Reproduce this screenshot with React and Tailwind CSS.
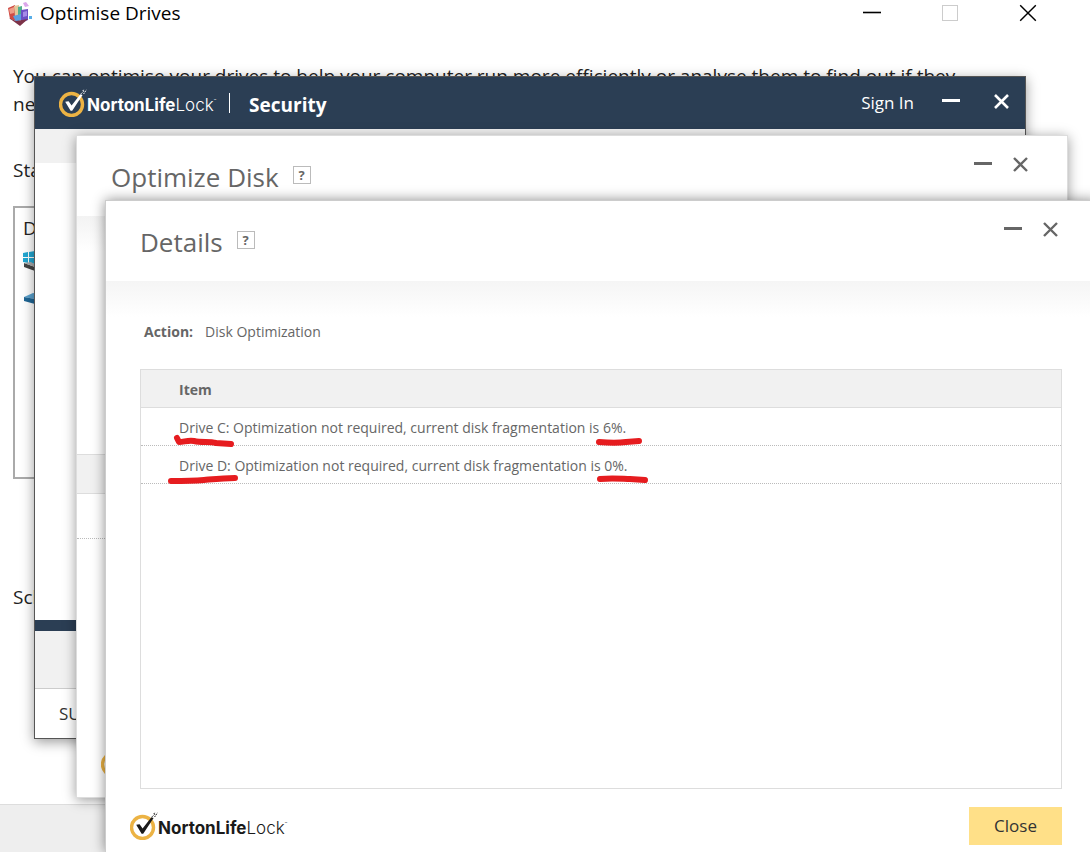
import React from 'react';

const drives = [
    { name: 'Drive C:', fragmentation: '6%' },
    { name: 'Drive D:', fragmentation: '0%' },
];

const CloseGlyph = ({ size = 15, strokeWidth = 2 }) => (
    <svg width={size} height={size} viewBox="0 0 15 15" fill="none" stroke="currentColor" strokeWidth={strokeWidth}>
        <path d="M1 1L14 14M14 1L1 14" />
    </svg>
);

const MinimizeGlyph = ({ strokeWidth = 3 }) => (
    <svg width="18" height="15" viewBox="0 0 18 15" fill="none" stroke="currentColor" strokeWidth={strokeWidth}>
        <path d="M0 6.5H18" />
    </svg>
);

const NortonLogo = ({ inverted }) => {
    const tone = inverted ? 'text-white' : 'text-[#1a1a1a]';

    return (
        <div className={`flex h-7 items-center ${tone}`}>
            <svg width="28" height="28" viewBox="0 0 28 28" fill="none" className="shrink-0">
                <circle cx="12.5" cy="15.5" r="11" stroke="#ecb344" strokeWidth="3.4" />
                <path d="M6.2 12.8L9.6 12.2L12.6 16.6L21.4 5.2L23.6 6L13.2 21.8H11.6Z" fill="currentColor" />
                <path d="M22 4.8L25 1.8M24.6 5L27.4 .8M23.8 2L24.6 .8" stroke="currentColor" strokeWidth="1" strokeDasharray="1.6 .8" />
            </svg>
            <span className="flex items-start pt-1 font-['Inter',sans-serif] text-[17px] leading-6">
                <span className="font-bold">NortonLife</span>
                <span className="font-light">Lock</span>
                <span className="text-[4px] leading-4">™</span>
            </span>
        </div>
    );
};

const DialogHeader = ({ title }) => (
    <header className="flex h-20 shrink-0 items-start justify-between bg-white pr-8 pl-[34px]">
        <div className="flex items-center gap-[14px] pt-[21px]">
            <h2 className="text-[26px] leading-10 text-[#666]">{title}</h2>
            <button type="button" aria-label="Help" className="mb-1 flex size-[18px] items-center justify-center border border-[#bbb] text-[13px] leading-4 font-bold text-[#666]">
                ?
            </button>
        </div>
        <div className="flex items-center gap-[21px] pt-[21px] pr-[7px] text-[#666]">
            <button type="button" aria-label="Minimize"><MinimizeGlyph /></button>
            <button type="button" aria-label="Close window"><CloseGlyph strokeWidth={2.4} /></button>
        </div>
    </header>
);

const OptimiseDrivesWindow = () => (
    <section className="flex h-full flex-col text-[19px] text-[#222]">
        <header className="flex h-[26px] items-center justify-between pr-[53px] pl-2 text-black">
            <div className="flex items-center gap-2">
                <svg width="24" height="25" viewBox="0 0 24 25">
                    <path d="M0 7L7 4L9 20L2 18Z" fill="#cf4a44" />
                    <path d="M1 8L6 6V12L2 13Z" fill="#ee9c86" />
                    <path d="M6 5L11 4V14L7 16Z" fill="#e3c79a" />
                    <path d="M10 6L14 5V14L10 15Z" fill="#4fb08c" />
                    <path d="M13 9L20 8V19L13 22Z" fill="#6c4fc4" />
                    <path d="M15 11L19 10V15L15 16Z" fill="#a58be8" />
                    <path d="M5 15L13 13V19L8 21Z" fill="#5b9fe0" />
                    <path d="M1 17L8 20L20 18L12 25Z" fill="#7c3248" />
                    <path d="M15 2L18 1L21 5L17 6Z" fill="#dba6ea" />
                    <path d="M21 15L24 15V18L21 18Z" fill="#58aee8" />
                </svg>
                <h1>Optimise Drives</h1>
            </div>
            <div className="flex items-center gap-[61px]">
                <button type="button" aria-label="Minimise"><MinimizeGlyph strokeWidth={1.6} /></button>
                <button type="button" aria-label="Maximise" disabled className="size-4 border border-[#ccc]" />
                <button type="button" aria-label="Close window"><CloseGlyph size={18} strokeWidth={1.2} /></button>
            </div>
        </header>
        <div className="flex flex-1 flex-col items-start px-[13px] pt-9">
            <p className="leading-7">
                You can optimise your drives to help your computer run more efficiently or analyse them to find out if they
                <br />
                need to
            </p>
            <h2 className="mt-10 leading-6">Status</h2>
            <div className="mt-6 h-[273px] w-3/4 border-2 border-[#aaa] px-2 pt-2">
                <p className="leading-6">Drive</p>
                <svg width="24" height="60" viewBox="2 -2 24 60" className="mt-2">
                    <g fill="#22a7d2">
                        <path d="M2 3L7 2V7H2ZM8 2L14 1V7H8ZM2 8H7V13L2 12ZM8 8H14V14L8 13Z" />
                    </g>
                    <path d="M3 13L14 17V21L3 17Z" fill="#444" />
                    <path d="M3 13L10 12L18 17H14Z" fill="#aaa" />
                    <path d="M3 47L12 43L20 44L14 49Z" fill="#5aa2cf" />
                    <path d="M3 47L14 49V54L3 51Z" fill="#1f6695" />
                </svg>
            </div>
            <h2 className="mt-[106px] leading-6">Scheduled optimisation</h2>
        </div>
        <footer className="h-12 border-t border-[#ddd] bg-[#eee]" />
    </section>
);

const NortonWindow = () => (
    <section className="absolute top-[76px] right-16 bottom-[113px] left-[34px] flex flex-col border border-[#555] bg-white shadow-[0_3px_12px_rgba(0,0,0,0.4)]">
        <header className="flex h-[52px] shrink-0 items-center justify-between bg-[#2b3e54] pr-4 pl-6 text-white">
            <div className="flex items-center">
                <NortonLogo inverted />
                <span className="ml-[13px] h-5 w-px bg-white" />
                <h2 className="ml-[19px] pt-1 text-[19px] leading-6 font-bold">Security</h2>
            </div>
            <div className="flex items-center pb-1">
                <a href="#signin" className="mr-7 pt-1 text-[17px] leading-6">Sign In</a>
                <button type="button" aria-label="Minimize" className="mr-[34px]"><MinimizeGlyph /></button>
                <button type="button" aria-label="Close window"><CloseGlyph strokeWidth={2.6} /></button>
            </div>
        </header>
        <div className="h-[34px] shrink-0 bg-[#f1f1f1]" />
        <div className="flex-1" />
        <div className="h-[11px] shrink-0 bg-[#2b3e54]" />
        <div className="h-[58px] shrink-0 border-b border-[#ccc] bg-[#f1f1f1]" />
        <footer className="flex h-[49px] shrink-0 items-center px-6 text-[17px] text-[#333]">SUPPORT</footer>
    </section>
);

const OptimizeDiskWindow = () => (
    <section className="absolute top-[135px] right-[22px] bottom-[54px] left-[76px] flex flex-col border border-[#ddd] bg-white shadow-[0_2px_12px_rgba(0,0,0,0.4)]">
        <DialogHeader title="Optimize Disk" />
        <div className="h-9 shrink-0 bg-linear-to-b from-[#f3f3f3] to-white" />
        <div className="flex-1" />
        <div className="h-10 shrink-0 border-y border-[#ddd] bg-[#f1f1f1]" />
        <div className="h-[45px] shrink-0 border-b border-dotted border-[#bbb]" />
        <div className="flex h-[258px] shrink-0 items-end px-6 pb-5">
            <NortonLogo />
        </div>
    </section>
);

// hand-drawn red marks under the drive names and percentages
const Annotations = () => (
    <svg width="520" height="130" viewBox="0 0 520 130" fill="none" stroke="#e61c1f" strokeWidth="6" strokeLinecap="round" strokeLinejoin="round" className="pointer-events-none absolute top-0 left-0">
        <path d="M36 68L38 72C43 72 47 70 53 71C61 73 68 71 75 73L90 74" />
        <path d="M30 111C42 111 51 111 63 110C74 109 83 108 94 108" />
        <path d="M458 72C469 73 478 73 485 72L498 71" />
        <path d="M459 109C472 108 483 109 489 109L504 110" />
    </svg>
);

const DetailsWindow = () => (
    <section className="absolute top-[200px] -right-[7px] bottom-0 left-[105px] flex flex-col border-t border-l border-[#ccc] bg-white shadow-[0_0_12px_rgba(0,0,0,0.45)]">
        <DialogHeader title="Details" />
        <div className="flex flex-1 flex-col bg-linear-to-b from-[#f5f5f5] to-white to-[36px] pr-[35px] pl-[34px]">
            <p className="flex gap-3 pt-[41px] pl-1 text-[14px] leading-5 text-[#666]">
                <strong>Action:</strong>
                <span>Disk Optimization</span>
            </p>
            <div className="relative mt-[27px] flex-1 border border-[#ddd]">
                <table className="w-full border-collapse text-left text-[14px] leading-5 text-[#666]">
                    <thead>
                        <tr className="h-[37px] border-b border-[#ddd] bg-[#f1f1f1]">
                            <th className="pt-1 pl-[38px] font-bold">Item</th>
                        </tr>
                    </thead>
                    <tbody>
                        {drives.map((drive) => (
                            <tr key={drive.name} className="h-[38px] border-b border-dotted border-[#bbb]">
                                <td className="pt-1 pl-[38px]">
                                    {drive.name} Optimization not required, current disk fragmentation is {drive.fragmentation}.
                                </td>
                            </tr>
                        ))}
                    </tbody>
                </table>
                <Annotations />
            </div>
        </div>
        <footer className="flex h-[63px] shrink-0 items-start justify-between pr-[35px] pl-6">
            <div className="pt-[23px]">
                <NortonLogo />
            </div>
            <button type="button" className="mt-[18px] h-[38px] w-[93px] bg-[#ffe088] text-[17px] text-[#333]">Close</button>
        </footer>
    </section>
);

const App = () => (
    <main className="relative h-screen overflow-hidden bg-white font-['Open_Sans','Noto_Sans',sans-serif]">
        <OptimiseDrivesWindow />
        <NortonWindow />
        <OptimizeDiskWindow />
        <DetailsWindow />
    </main>
);

export default App;
